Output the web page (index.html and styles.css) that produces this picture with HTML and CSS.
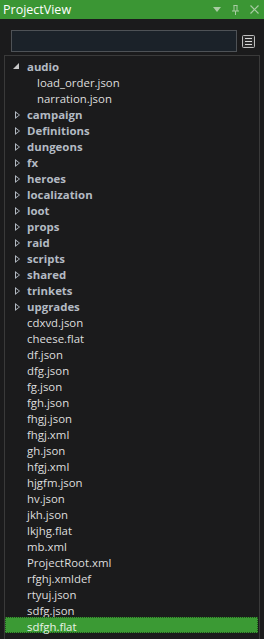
FILE: index.html
```html
<!DOCTYPE html>
<html>
<head>
<meta charset="utf-8">
<link rel="stylesheet" href="styles.css">
</head>
<body>
<div class="window">
  <div class="titlebar">
    <span class="title">ProjectView</span>
    <div class="title-icons">
      <svg width="8" height="5" viewBox="0 0 8 5"><path d="M0 0H8L4 5Z" fill="#a9cca4"/></svg>
      <svg width="7" height="10" viewBox="0 0 7 10"><path d="M1.5 0.5H5.5M2 0.5V6M5 0.5V6M0 6H7M3.5 6V10" stroke="#a9cca4" fill="none" stroke-width="1"/></svg>
      <svg width="9" height="9" viewBox="0 0 9 9"><path d="M0.5 0.5L8.5 8.5M8.5 0.5L0.5 8.5" stroke="#a9cca4" stroke-width="1.2"/></svg>
    </div>
  </div>
  <div class="toolbar">
    <div class="search"></div>
    <svg class="menu" width="13" height="13" viewBox="0 0 13 13">
      <rect x="0.5" y="0.5" width="12" height="12" rx="1" fill="#2a2a2a" stroke="#bdbdbd"/>
      <path d="M3 3.5H10M3 6.5H10M3 9.5H10" stroke="#d8d8d8" stroke-width="1.2"/>
    </svg>
  </div>
  <div class="tree">
    <div class="row folder"><span class="arrow open"></span>audio</div>
    <div class="row file sub">load_order.json</div>
    <div class="row file sub">narration.json</div>
    <div class="row folder"><span class="arrow"></span>campaign</div>
    <div class="row folder"><span class="arrow"></span>Definitions</div>
    <div class="row folder"><span class="arrow"></span>dungeons</div>
    <div class="row folder"><span class="arrow"></span>fx</div>
    <div class="row folder"><span class="arrow"></span>heroes</div>
    <div class="row folder"><span class="arrow"></span>localization</div>
    <div class="row folder"><span class="arrow"></span>loot</div>
    <div class="row folder"><span class="arrow"></span>props</div>
    <div class="row folder"><span class="arrow"></span>raid</div>
    <div class="row folder"><span class="arrow"></span>scripts</div>
    <div class="row folder"><span class="arrow"></span>shared</div>
    <div class="row folder"><span class="arrow"></span>trinkets</div>
    <div class="row folder"><span class="arrow"></span>upgrades</div>
    <div class="row file">cdxvd.json</div>
    <div class="row file">cheese.flat</div>
    <div class="row file">df.json</div>
    <div class="row file">dfg.json</div>
    <div class="row file">fg.json</div>
    <div class="row file">fgh.json</div>
    <div class="row file">fhgj.json</div>
    <div class="row file">fhgj.xml</div>
    <div class="row file">gh.json</div>
    <div class="row file">hfgj.xml</div>
    <div class="row file">hjgfm.json</div>
    <div class="row file">hv.json</div>
    <div class="row file">jkh.json</div>
    <div class="row file">lkjhg.flat</div>
    <div class="row file">mb.xml</div>
    <div class="row file">ProjectRoot.xml</div>
    <div class="row file">rfghj.xmldef</div>
    <div class="row file">rtyuj.json</div>
    <div class="row file">sdfg.json</div>
    <div class="row file selected">sdfgh.flat</div>
  </div>
</div>
</body>
</html>
```

FILE: styles.css
```css
html, body {
  margin: 0;
  padding: 0;
  background: #1b1b1c;
  overflow: hidden;
}
.window {
  width: 264px;
  height: 639px;
  font-family: "Open Sans", "Noto Sans", sans-serif;
  font-size: 11.4px;
}
.titlebar {
  height: 19px;
  background: #3b9634;
  display: flex;
  align-items: center;
  justify-content: space-between;
  padding: 0 5px 0 3px;
}
.title {
  color: #ffffff;
  font-size: 12.5px;
  line-height: 19px;
}
.title-icons {
  display: flex;
  align-items: center;
  gap: 11px;
}
.title-icons svg {
  display: block;
}
.toolbar {
  display: flex;
  align-items: center;
  padding: 11px 0 0 11px;
  height: 22px;
  gap: 5px;
}
.search {
  width: 224px;
  height: 20px;
  background: #1b2229;
  border: 1px solid #4e5256;
}
.menu {
  display: block;
}
.tree {
  margin: 3px 4px 0 4px;
  border: 1px solid #3a3a3a;
  border-bottom: none;
  height: 600px;
  padding-top: 1px;
}
.row {
  height: 16px;
  padding-top: 3px;
  line-height: 13px;
  white-space: nowrap;
  position: relative;
  box-sizing: border-box;
}
.folder {
  font-weight: bold;
  color: #b3bac3;
  padding-left: 22px;
}
.file {
  color: #dedede;
  padding-left: 22px;
}
.file.sub {
  padding-left: 32px;
}
.arrow {
  position: absolute;
  left: 10px;
  top: 6px;
  width: 0;
  height: 0;
  border-top: 4px solid transparent;
  border-bottom: 4px solid transparent;
  border-left: 5px solid #b3bac3;
}
.arrow::after {
  content: "";
  position: absolute;
  left: -4px;
  top: -2.5px;
  border-top: 2.5px solid transparent;
  border-bottom: 2.5px solid transparent;
  border-left: 3px solid #1b1b1c;
}
.arrow.open {
  left: 8px;
  top: 6px;
  border: none;
  width: 0;
  height: 0;
  border-bottom: 6px solid #c8c8c8;
  border-left: 6px solid transparent;
}
.arrow.open::after {
  display: none;
}
.selected {
  background: #3b9a34;
  color: #e8f2e6;
  border: 1px dotted #1f4f1b;
  padding-top: 2px;
  padding-left: 21px;
  margin-right: 1px;
}
```
